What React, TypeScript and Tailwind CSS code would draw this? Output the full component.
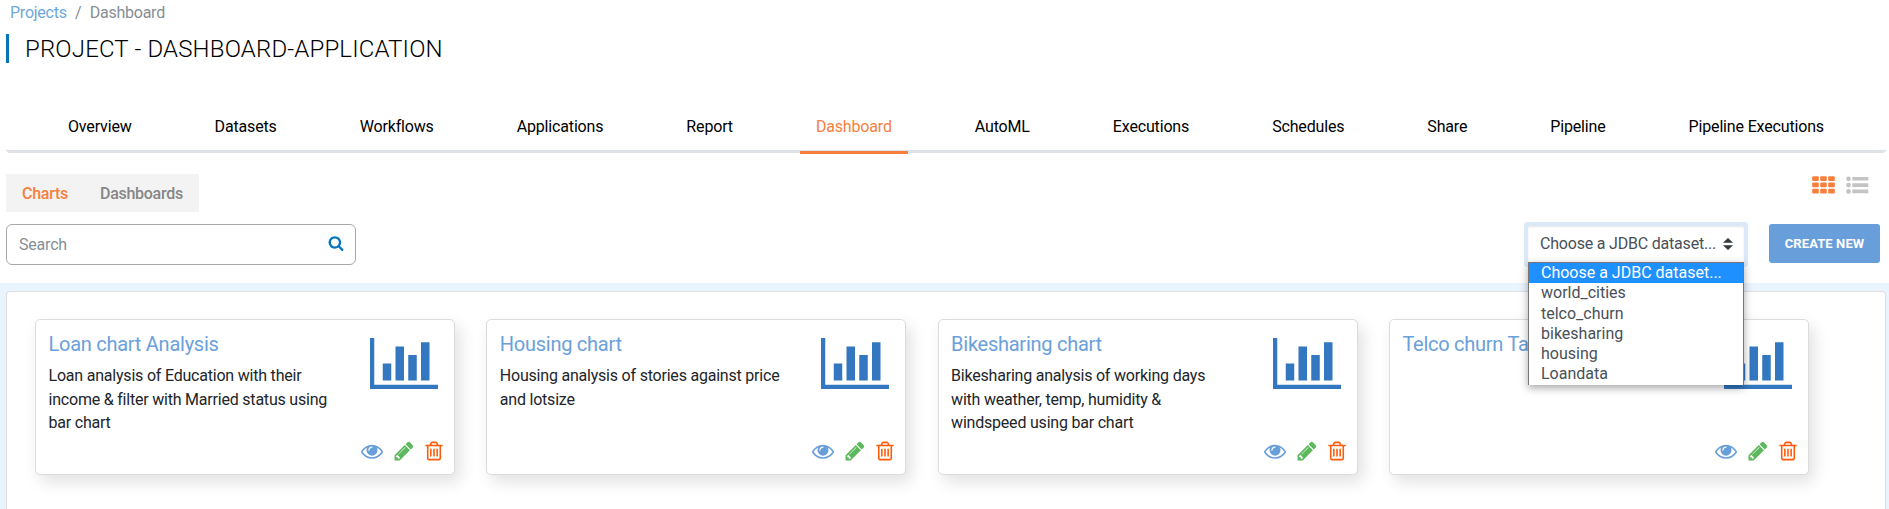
import React from "react";

const tabs = [
  "Overview",
  "Datasets",
  "Workflows",
  "Applications",
  "Report",
  "Dashboard",
  "AutoML",
  "Executions",
  "Schedules",
  "Share",
  "Pipeline",
  "Pipeline Executions",
];

const options = [
  "Choose a JDBC dataset...",
  "world_cities",
  "telco_churn",
  "bikesharing",
  "housing",
  "Loandata",
];

const charts = [
  {
    title: "Loan chart Analysis",
    text: "Loan analysis of Education with their income & filter with Married status using bar chart",
  },
  { title: "Housing chart", text: "Housing analysis of stories against price and lotsize" },
  {
    title: "Bikesharing chart",
    text: "Bikesharing analysis of working days with weather, temp, humidity & windspeed using bar chart",
  },
  { title: "Telco churn Ta", text: "" },
];

function BarChartIcon() {
  return (
    <svg viewBox="0 0 2048 1536" className="h-[51px] w-[68px] shrink-0 fill-[#3277c0]">
      <path d="M0 0h128v1408h1920v128H0zM384 768h256v512H384zM768 256h256v1024H768zM1152 512h256v768h-256zM1536 128h256v1152h-256z" />
    </svg>
  );
}

function EyeIcon() {
  return (
    <svg viewBox="0 0 1792 1792" className="size-[22px] fill-[#689ed9]">
      <path d="M1664 960q-152-236-381-353 61 104 61 225 0 185-131.500 316.500t-316.500 131.500-316.500-131.500-131.500-316.500q0-121 61-225-229 117-381 353 133 205 333.500 326.500t434.500 121.500 434.500-121.500 333.500-326.500zm-720-384q0-20-14-34t-34-14q-125 0-214.500 89.500t-89.500 214.500q0 20 14 34t34 14 34-14 14-34q0-86 61-147t147-61q20 0 34-14t14-34zm848 384q0 34-20 69-140 230-376.500 368.500t-499.500 138.500-499.500-139-376.500-368q-20-35-20-69t20-69q140-229 376.500-368t499.500-139 499.500 139 376.500 368q20 35 20 69z" />
    </svg>
  );
}

function PencilIcon() {
  return (
    <svg viewBox="0 0 1792 1792" className="ml-[10px] size-[22px] fill-[#5cb85c]">
      <path d="M491 1536l91-91-235-235-91 91v107h128v128h107zm523-928q0-22-22-22-10 0-17 7l-542 542q-7 7-7 17 0 22 22 22 10 0 17-7l542-542q7-7 7-17zm-54-192l416 416-832 832h-416v-416zm683 96q0 53-37 90l-166 166-416-416 166-165q36-38 90-38 53 0 91 38l235 234q37 39 37 91z" />
    </svg>
  );
}

function TrashIcon() {
  return (
    <svg viewBox="0 0 1792 1792" className="ml-2 size-[22px] fill-[#ff5a09]">
      <path d="M704 736v576q0 14-9 23t-23 9h-64q-14 0-23-9t-9-23v-576q0-14 9-23t23-9h64q14 0 23 9t9 23zm256 0v576q0 14-9 23t-23 9h-64q-14 0-23-9t-9-23v-576q0-14 9-23t23-9h64q14 0 23 9t9 23zm256 0v576q0 14-9 23t-23 9h-64q-14 0-23-9t-9-23v-576q0-14 9-23t23-9h64q14 0 23 9t9 23zm128 724v-948h-896v948q0 22 7 40.500t14.500 27 10.500 8.500h832q3 0 10.500-8.500t14.500-27 7-40.500zm-672-1076h448l-48-117q-7-9-17-11h-317q-10 2-17 11zm928 32v64q0 14-9 23t-23 9h-96v948q0 83-47 143.500t-113 60.500h-832q-66 0-113-58.500t-47-141.500v-952h-96q-14 0-23-9t-9-23v-64q0-14 9-23t23-9h309l70-167q15-37 54-63t79-26h320q40 0 79 26t54 63l70 167h309q14 0 23 9t9 23z" />
    </svg>
  );
}

function SearchIcon() {
  return (
    <svg viewBox="0 0 1792 1792" className="mb-1 size-4 fill-[#0275bb]">
      <path d="M1216 832q0-185-131.500-316.500t-316.500-131.500-316.500 131.500-131.500 316.500 131.500 316.500 316.500 131.500 316.500-131.500 131.500-316.500zm512 832q0 52-38 90t-90 38q-54 0-90-38l-343-342q-179 124-399 124-143 0-273.500-55.500t-225-150-150-225-55.500-273.500 55.500-273.500 150-225 225-150 273.500-55.500 273.500 55.500 225 150 150 225 55.500 273.500q0 220-124 399l343 343q37 37 37 90z" />
    </svg>
  );
}

function GridIcon() {
  return (
    <svg viewBox="0 0 23 18" className="h-[18px] w-[23px] fill-[#f77f3e]">
      {[0, 6.3, 12.6].map((y) =>
        [0, 8, 16].map((x) => (
          <rect key={`${x}-${y}`} x={x + 0.2} y={y + 0.2} width="6.6" height="4.7" rx="1" />
        )),
      )}
    </svg>
  );
}

function ListIcon() {
  return (
    <svg viewBox="0 0 23 18" className="h-[18px] w-[23px] fill-[#c4c4c4]">
      {[2.8, 9.1, 15.4].map((y) => (
        <g key={y}>
          <circle cx="2.5" cy={y} r="2.4" />
          <rect x="6.3" y={y - 1.8} width="16" height="3.6" rx="0.5" />
        </g>
      ))}
    </svg>
  );
}

export default function App() {
  return (
    <div className="flex h-[509px] flex-col overflow-hidden bg-white font-['Roboto',sans-serif] text-[#212529]">
      <nav className="flex h-[25px] items-center gap-[8.3px] pl-[10px] text-base leading-6 tracking-[-0.24px] text-[#868e96]">
        <a className="text-[#6fa8dc]">Projects</a>
        <span>/</span>
        <span>Dashboard</span>
      </nav>

      <h1 className="mt-[9px] ml-1.5 flex h-[29px] items-center border-l-[3px] border-[#0275bb] pl-4 text-2xl leading-7 font-light tracking-[0.16px] text-black">
        PROJECT - DASHBOARD-APPLICATION
      </h1>

      <ul className="mt-[42px] mr-[3px] ml-1.5 flex h-12 justify-between rounded-b-sm border-b-[3px] border-[#dee2e6] px-[46px] text-base tracking-[-0.16px] text-black">
        {tabs.map((tab) => (
          <li
            key={tab}
            className={
              tab === "Dashboard"
                ? "-mb-1 h-[49px] border-b-[3px] border-[#f77f3e] px-4 leading-[43px] text-[#f77f3e]"
                : "px-4 leading-[43px]"
            }
          >
            {tab}
          </li>
        ))}
      </ul>

      <div className="mt-[21px] flex justify-between pr-[20px] pl-1.5">
        <div className="flex h-[38px] items-center bg-[#f3f3f3] pt-0.5 text-base font-medium tracking-[-0.27px] text-[#868686]">
          <span className="px-4 text-[#f77f3e]">Charts</span>
          <span className="px-4">Dashboards</span>
        </div>
        <div className="mt-[1.5px] flex gap-[11px]">
          <GridIcon />
          <ListIcon />
        </div>
      </div>

      <div className="mt-3 flex h-[59px] items-start justify-between pr-[9px] pl-1.5">
        <div className="flex h-[41px] w-[350px] items-center justify-between rounded-md border border-[#a9a9a9] pr-[11px] pl-3 text-base tracking-[-0.2px] text-[#868e96]">
          <span>Search</span>
          <SearchIcon />
        </div>
        <div className="flex items-start gap-[25px]">
          <div className="relative mt-[1.5px] w-[216px]">
            <div className="flex h-[37px] items-center justify-between rounded-[1px] bg-white pr-[11px] pl-3 text-base leading-6 tracking-[-0.2px] text-[#495057] shadow-[0_0_0_4px_#dbe9f7,inset_0_1px_2px_rgba(0,0,0,0.1)]">
              <span>Choose a JDBC dataset...</span>
              <svg viewBox="0 0 4 5" className="h-3 w-[10px] fill-[#343a40]" preserveAspectRatio="none">
                <path d="M2 0L0 2h4zm0 5L0 3h4z" />
              </svg>
            </div>
            <ul className="absolute top-[36.5px] left-0 z-10 w-[216px] border border-b-0 border-[#767676] bg-white text-base text-[#495057] shadow-[0_3px_8px_rgba(0,0,0,0.35)]">
              {options.map((option, i) => (
                <li
                  key={option}
                  className={
                    i === 0
                      ? "h-[20.3px] bg-[#1e90ff] pl-3 leading-[20px] text-white"
                      : "h-[20.3px] pl-3 leading-[20px]"
                  }
                >
                  {option}
                </li>
              ))}
            </ul>
          </div>
          <button className="h-[39px] w-[111px] rounded-[3px] bg-[#689ed9] text-[13px] font-bold tracking-[0.1px] text-white">
            CREATE NEW
          </button>
        </div>
      </div>

      <main className="flex flex-1 bg-[#eaf4ff] pt-2 pr-[3px] pl-1.5">
        <div className="flex flex-1 items-start gap-[31.3px] rounded-t-[4px] border border-b-0 border-[#dfdfdf] bg-white pt-[27px] pl-7">
          {charts.map((chart) => (
            <article
              key={chart.title}
              className="flex h-[156px] w-[420px] flex-col justify-between rounded-[5px] border border-[#dcdcdc] bg-white pt-3 pr-[9px] pb-[12.5px] pl-[12.5px] shadow-[5px_7px_16px_rgba(0,0,0,0.12)]"
            >
              <div className="flex h-[108px] justify-between pr-[7px]">
                <div className="w-[284px]">
                  <h2 className="text-xl leading-[25px] tracking-[-0.26px] text-[#6aa0db]">
                    {chart.title}
                  </h2>
                  <p className="mt-[7px] text-base leading-[23.5px] tracking-[-0.21px]">
                    {chart.text}
                  </p>
                </div>
                <div className="pt-[5.5px]">
                  <BarChartIcon />
                </div>
              </div>
              <div className="flex justify-end">
                <EyeIcon />
                <PencilIcon />
                <TrashIcon />
              </div>
            </article>
          ))}
        </div>
      </main>
    </div>
  );
}
